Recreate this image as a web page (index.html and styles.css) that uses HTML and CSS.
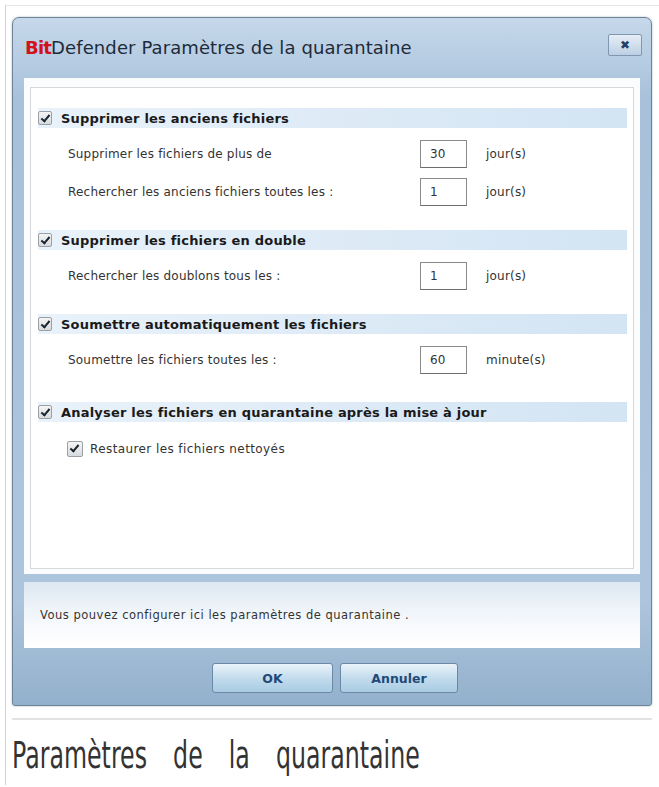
FILE: index.html
```html
<!DOCTYPE html>
<html>
<head>
    <meta charset="utf-8">
    <title>Paramètres de la quarantaine</title>
    <link rel="stylesheet" href="styles.css">
</head>
<body>
<div class="frame">
    <div class="dialog">
        <div class="titlebar">
            <div class="title"><span class="brand">Bit</span>Defender Paramètres de la quarantaine</div>
            <button class="close">&#x2716;</button>
        </div>

        <div class="body">
            <div class="panel">
                <div class="section">
                    <div class="head"><span class="check"></span>Supprimer les anciens fichiers</div>
                    <div class="row">
                        <span class="label">Supprimer les fichiers de plus de</span>
                        <span class="box">30</span>
                        <span class="unit">jour(s)</span>
                    </div>
                    <div class="row">
                        <span class="label">Rechercher les anciens fichiers toutes les :</span>
                        <span class="box">1</span>
                        <span class="unit">jour(s)</span>
                    </div>
                </div>

                <div class="section">
                    <div class="head"><span class="check"></span>Supprimer les fichiers en double</div>
                    <div class="row">
                        <span class="label">Rechercher les doublons tous les :</span>
                        <span class="box">1</span>
                        <span class="unit">jour(s)</span>
                    </div>
                </div>

                <div class="section wide">
                    <div class="head"><span class="check"></span>Soumettre automatiquement les fichiers</div>
                    <div class="row">
                        <span class="label">Soumettre les fichiers toutes les :</span>
                        <span class="box">60</span>
                        <span class="unit">minute(s)</span>
                    </div>
                </div>

                <div class="section">
                    <div class="head"><span class="check"></span>Analyser les fichiers en quarantaine après la mise à jour</div>
                    <div class="sub"><span class="check"></span>Restaurer les fichiers nettoyés</div>
                </div>
            </div>
        </div>

        <div class="status">Vous pouvez configurer ici les paramètres de quarantaine .</div>

        <div class="buttons">
            <button class="btn ok">OK</button>
            <button class="btn">Annuler</button>
        </div>
    </div>

    <div class="rule"></div>
    <p class="caption">Paramètres de la quarantaine</p>
</div>
</body>
</html>
```

FILE: styles.css
```css
body {
    margin: 0;
    background: #fff;
    font-family: "DejaVu Sans", sans-serif;
}
.frame {
    margin: 5px 0 0 5px;
    border-left: 1px solid #d4d4d4;
    border-top: 1px solid #e4e4e4;
    padding: 11px 0 0 6px;
    height: 780px;
    box-sizing: border-box;
}

/* dialog window */
.dialog {
    width: 640px;
    height: 689px;
    box-sizing: border-box;
    border: 1px solid #6f8297;
    border-radius: 7px 7px 3px 3px;
    background: linear-gradient(#c6d8ea, #a7c1da 12%, #adc5dc 85%, #93b0cc);
    box-shadow: 0 0 2px #9aa;
    display: flex;
    flex-direction: column;
}
.titlebar {
    height: 60px;
    display: flex;
    align-items: center;
    justify-content: space-between;
    padding: 0 9px 0 12px;
}
.title {
    font-family: "DejaVu Sans", sans-serif;
    font-size: 18px;
    color: #1d2b3a;
    letter-spacing: 0.1px;
    margin-top: -2px;
}
.brand {
    color: #d1121b;
    font-weight: bold;
    letter-spacing: -0.8px;
}
.close {
    width: 34px;
    height: 22px;
    margin-top: -6px;
    border: 1px solid #7f97b0;
    border-radius: 2px;
    background: linear-gradient(#e6eef6, #bcd0e3);
    color: #1f3f66;
    font-size: 12px;
    padding: 0;
}

/* white settings area */
.body {
    margin: 0 11px;
    padding: 9px 6px 5px;
    height: 496px;
    box-sizing: border-box;
    background: #fbfcfd;
}
.panel {
    height: 100%;
    box-sizing: border-box;
    border: 1px solid #d6d9dc;
    background: #fff;
    padding: 20px 6px 0 7px;
    color: #222;
}
.section {
    margin-bottom: 24px;
}
.section.wide {
    margin-bottom: 28px;
}
.head {
    height: 20px;
    display: flex;
    align-items: center;
    background: linear-gradient(to right, #e9f2fa, #d3e4f3);
    font-size: 13px;
    font-weight: bold;
    letter-spacing: 0.2px;
    color: #1a1a1a;
    margin-bottom: 12px;
}
.check {
    width: 14px;
    height: 14px;
    box-sizing: border-box;
    border: 1px solid #9aa0a6;
    border-radius: 2px;
    background: linear-gradient(#f4f4f4, #d8dbde);
    margin-right: 9px;
    position: relative;
}
.check::after {
    content: "";
    position: absolute;
    left: 4px;
    top: 1px;
    width: 3px;
    height: 7px;
    border: solid #1b2530;
    border-width: 0 2px 2px 0;
    transform: rotate(40deg);
}
.row {
    display: flex;
    align-items: center;
    height: 28px;
    margin-bottom: 10px;
    padding-left: 30px;
    font-size: 12px;
    letter-spacing: 0.2px;
    color: #333;
}
.label {
    width: 352px;
}
.box {
    width: 47px;
    height: 28px;
    box-sizing: border-box;
    border: 1px solid #8a8a8a;
    border-bottom-color: #6d6d6d;
    padding-left: 9px;
    line-height: 26px;
    font-size: 12px;
}
.unit {
    margin-left: 19px;
}
.sub {
    display: flex;
    align-items: center;
    margin-left: 29px;
    margin-top: 18px;
    height: 18px;
    font-size: 12px;
    letter-spacing: 0.4px;
    color: #333;
}
.sub .check {
    width: 16px;
    height: 16px;
    margin-right: 7px;
}

/* hint strip */
.status {
    margin: 8px 11px 0;
    height: 66px;
    display: flex;
    align-items: center;
    padding-left: 16px;
    background: linear-gradient(#dde8f2, #f6f9fc 60%, #fff);
    font-size: 11.5px;
    letter-spacing: 0.5px;
    color: #333;
}
.buttons {
    display: flex;
    justify-content: center;
    gap: 7px;
    margin-top: 15px;
    padding-left: 6px;
}
.btn {
    width: 118px;
    height: 30px;
    border: 1px solid #6b88a6;
    border-radius: 3px;
    background: linear-gradient(#eaf3fa, #c3dced 50%, #a9cbe2);
    font-family: "DejaVu Sans", sans-serif;
    font-weight: bold;
    font-size: 12.5px;
    color: #1f4a78;
}
.btn.ok {
    width: 121px;
}

/* figure caption */
.rule {
    margin: 12px 2px 0 0;
    height: 2px;
    background: #e2e2e2;
    width: 640px;
}
.caption {
    margin: 14px 0 0 0;
    font-family: "DejaVu Sans", sans-serif;
    font-size: 37px;
    color: #333;
    transform: scaleX(0.64);
    transform-origin: left;
    word-spacing: 29px;
    white-space: nowrap;
}
```
